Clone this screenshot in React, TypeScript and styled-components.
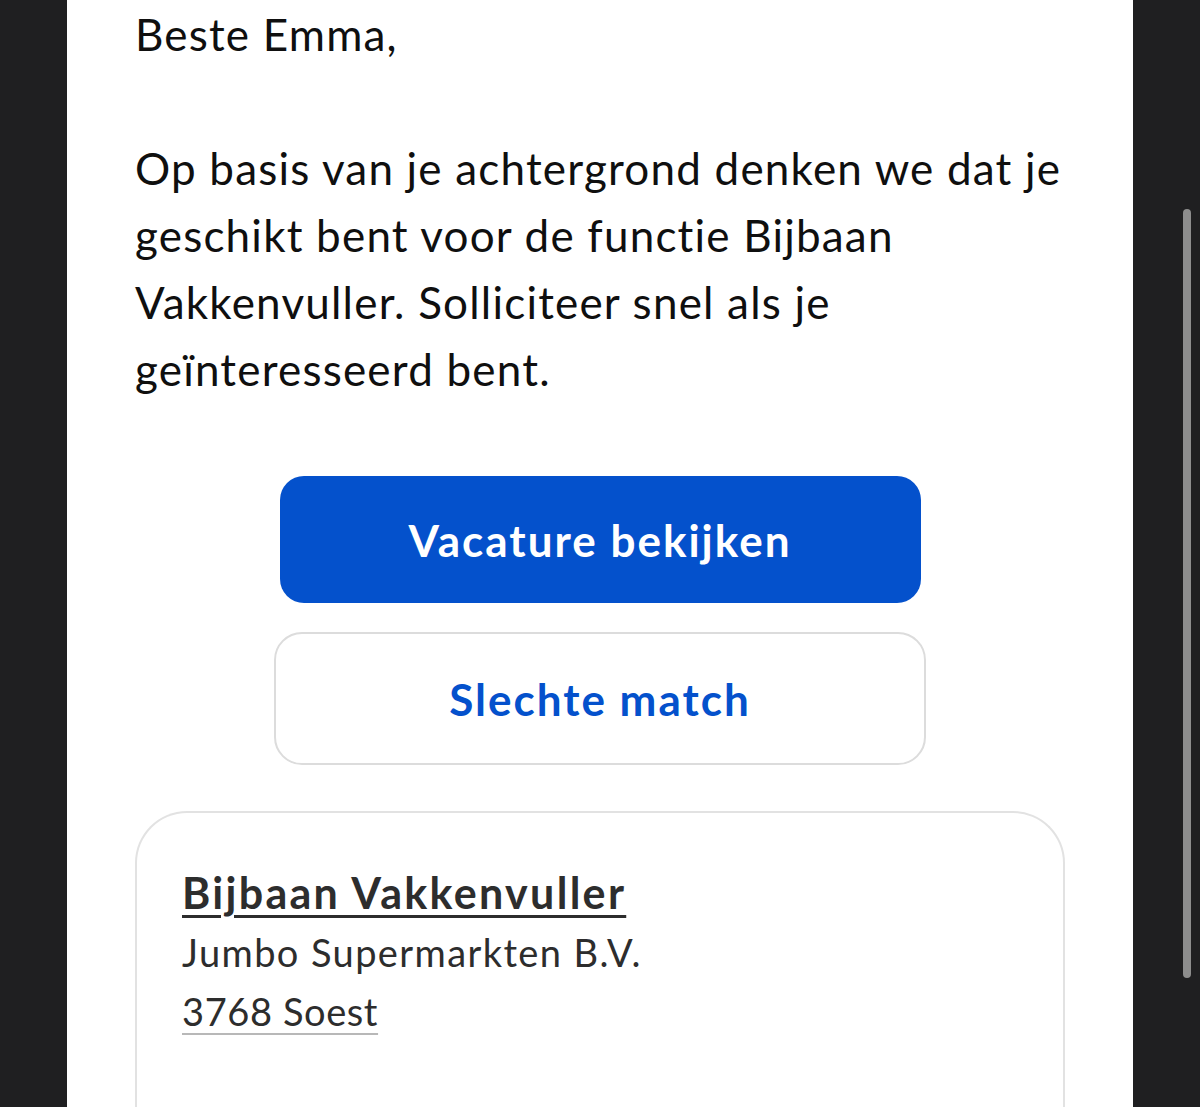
import styled, { createGlobalStyle } from "styled-components";

const GlobalStyle = createGlobalStyle`
    html, body {
        margin: 0;
        padding: 0;
        background: #1f1f21;
        overflow: hidden;
    }
`

const Pagina = styled.div`
    display: flex;
    height: 1107px;
    background: #1f1f21;
    font-family: "Lato", "Noto Sans", sans-serif;
`

const Zijkant = styled.div`
    width: 67px;
    flex-shrink: 0;
`

const ScrollZijkant = styled(Zijkant)`
    display: flex;
    justify-content: flex-end;
    padding: 209px 9px 0 0;
    box-sizing: border-box;
`

const ScrollDuim = styled.div`
    width: 8px;
    height: 769px;
    border-radius: 4px;
    background: #8d8d8d;
`

const MailPaneel = styled.main`
    flex: 1;
    background: #ffffff;
    padding: 1px 68px 0 68px;
    overflow: hidden;
    display: flex;
    flex-direction: column;
`

const Tekst = styled.p`
    margin: 0;
    font-size: 44px;
    line-height: 67px;
    letter-spacing: 1.2px;
    color: #0f0f0f;
`

const KnoppenGroep = styled.div`
    display: flex;
    flex-direction: column;
    align-items: center;
    gap: 29px;
    margin-top: 73px;
`

const Knop = styled.a<{ $primair?: boolean }>`
    display: flex;
    align-items: center;
    justify-content: center;
    box-sizing: border-box;
    width: ${(p) => (p.$primair ? "641px" : "652px")};
    height: ${(p) => (p.$primair ? "127px" : "133px")};
    border-radius: ${(p) => (p.$primair ? "24px" : "28px")};
    background: ${(p) => (p.$primair ? "#0451cc" : "#ffffff")};
    border: ${(p) => (p.$primair ? "none" : "2px solid #dcdcdc")};
    color: ${(p) => (p.$primair ? "#ffffff" : "#0451cc")};
    font-size: 44px;
    font-weight: 700;
    letter-spacing: 2px;
    text-decoration: none;
`

const VacatureKaart = styled.section`
    margin-top: 46px;
    border: 2px solid #e2e2e2;
    border-bottom: none;
    border-radius: 52px 52px 0 0;
    padding: 50px 45px 80px 45px;
    display: flex;
    flex-direction: column;
`

const KaartTitel = styled.a`
    font-size: 43px;
    line-height: 60px;
    font-weight: 700;
    letter-spacing: 2.3px;
    color: #2d2d2d;
    text-decoration: underline;
    text-decoration-thickness: 3px;
    text-underline-offset: 6px;
    align-self: flex-start;
`

const KaartRegel = styled.span<{ $link?: boolean }>`
    font-size: 38px;
    line-height: 59px;
    letter-spacing: ${(p) => (p.$link ? "0.6px" : "1.4px")};
    color: #2d2d2d;
    align-self: flex-start;
    text-decoration: ${(p) => (p.$link ? "underline" : "none")};
    text-decoration-color: #b8b8b8;
    text-decoration-thickness: 2px;
    text-underline-offset: 7px;
`

function App() {
    return (
        <Pagina>
            <GlobalStyle />
            <Zijkant />
            <MailPaneel>
                <Tekst>Beste Emma,</Tekst>
                <Tekst>&nbsp;</Tekst>
                <Tekst>
                    Op basis van je achtergrond denken we dat je geschikt bent voor de functie Bijbaan Vakkenvuller. Solliciteer snel als je geïnteresseerd bent.
                </Tekst>

                <KnoppenGroep>
                    <Knop $primair href="#">Vacature bekijken</Knop>
                    <Knop href="#">Slechte match</Knop>
                </KnoppenGroep>

                <VacatureKaart>
                    <KaartTitel href="#">Bijbaan Vakkenvuller</KaartTitel>
                    <KaartRegel>Jumbo Supermarkten B.V.</KaartRegel>
                    <KaartRegel $link>3768 Soest</KaartRegel>
                </VacatureKaart>
            </MailPaneel>
            <ScrollZijkant>
                <ScrollDuim />
            </ScrollZijkant>
        </Pagina>
    )
}

export default App;
